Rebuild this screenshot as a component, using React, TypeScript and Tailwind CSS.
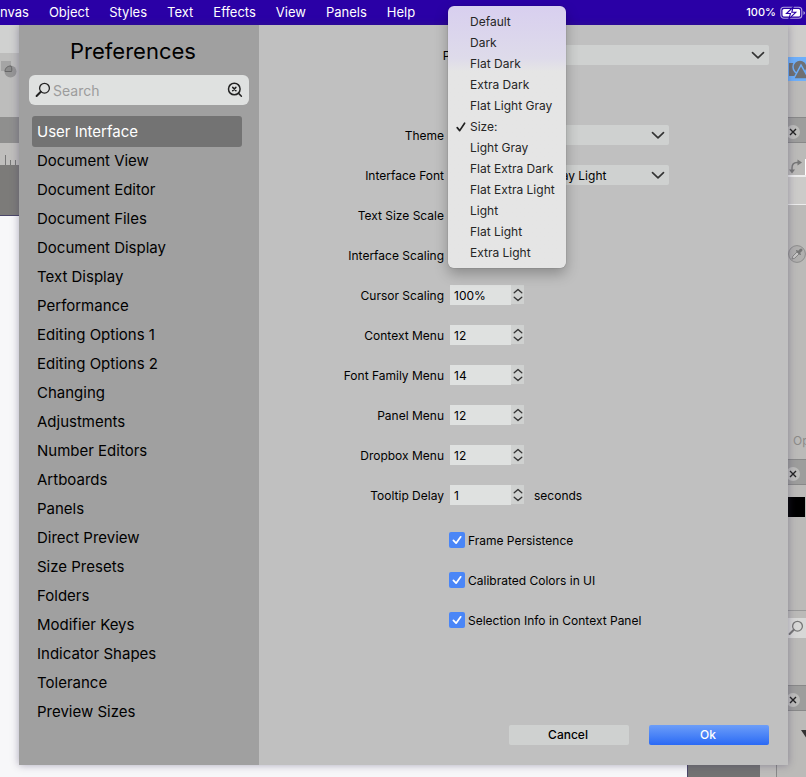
import React, { useId } from "react";

const menuBar = ["nvas", "Object", "Styles", "Text", "Effects", "View", "Panels", "Help"];

const sections = [
  "User Interface", "Document View", "Document Editor", "Document Files", "Document Display",
  "Text Display", "Performance", "Editing Options 1", "Editing Options 2", "Changing",
  "Adjustments", "Number Editors", "Artboards", "Panels", "Direct Preview", "Size Presets",
  "Folders", "Modifier Keys", "Indicator Shapes", "Tolerance", "Preview Sizes",
];

const themes = [
  "Default", "Dark", "Flat Dark", "Extra Dark", "Flat Light Gray", "Size:", "Light Gray",
  "Flat Extra Dark", "Flat Extra Light", "Light", "Flat Light", "Extra Light",
];

function Magnifier({ className }: { className: string }) {
  return (
    <svg viewBox="0 0 16 16" className={className} fill="none" stroke="currentColor">
      <circle cx="9.5" cy="6.2" r="4.9" strokeWidth="1.3" />
      <path d="M5.8 9.8 1.6 14" strokeWidth="2" strokeLinecap="round" />
    </svg>
  );
}

function ClearIcon() {
  return (
    <svg viewBox="0 0 16 16" className="size-4" fill="none" stroke="#222" strokeWidth="1.5" strokeLinecap="round">
      <circle cx="7.3" cy="7" r="5.8" />
      <path d="m11.6 11.4 2.8 2.8M5.7 5.4l3.2 3.2M8.9 5.4 5.7 8.6" />
    </svg>
  );
}

function Dropdown({ label, value, wide, children }: { label: string; value: string; wide?: boolean; children?: React.ReactNode }) {
  const id = useId();
  return (
    <div className="flex h-5 items-center gap-1.5">
      <label htmlFor={id} className={wide ? "w-[220px] shrink-0 pt-0.5 text-right" : "w-[185px] shrink-0 pt-0.5 text-right"}>{label}</label>
      <div className={wide ? "relative mr-[19px] flex-1" : "relative w-[219px]"}>
        <select id={id} defaultValue={value} className="block h-5 w-full appearance-none rounded-xs bg-[#cfd1d0] pt-px text-black outline-none">
          <option value={value}>{value}</option>
        </select>
        <svg viewBox="0 0 14 8" className="pointer-events-none absolute top-1.5 right-1 h-2 w-3.5" fill="none" stroke="#333" strokeWidth="1.6" strokeLinecap="round" strokeLinejoin="round">
          <path d="m1.5 1.6 5.5 5.3 5.5-5.3" />
        </svg>
        {children}
      </div>
    </div>
  );
}

function Stepper({ label, value, unit }: { label: string; value: string; unit?: string }) {
  const id = useId();
  return (
    <div className="flex h-5 items-center gap-1.5">
      <label htmlFor={id} className="w-[185px] shrink-0 pt-0.5 text-right">{label}</label>
      <div className="flex">
        <input id={id} defaultValue={value} className="h-5 w-[61px] bg-[#dfe1e0] px-1 pt-px outline-none" />
        <button type="button" aria-label={"Step " + label} className="flex h-[19px] w-[13px] items-center justify-center bg-[#cfd1d0]">
          <svg viewBox="0 0 10 14" className="h-3.5 w-2.5" fill="none" stroke="#333" strokeWidth="1.3" strokeLinecap="round" strokeLinejoin="round">
            <path d="M1.2 4.8 5 1.4l3.8 3.4M1.2 9.2 5 12.6l3.8-3.4" />
          </svg>
        </button>
      </div>
      {unit && <span className="ml-1 pt-0.5">{unit}</span>}
    </div>
  );
}

function Check({ label }: { label: string }) {
  return (
    <label className="ml-[190px] flex h-5 items-center gap-[3px]">
      <span className="grid size-4 place-items-center">
        <input type="checkbox" defaultChecked className="col-start-1 row-start-1 size-4 appearance-none rounded-xs bg-[#4a86f7]" />
        <svg viewBox="0 0 16 16" className="pointer-events-none col-start-1 row-start-1 size-4" fill="none" stroke="white" strokeWidth="1.7" strokeLinecap="round" strokeLinejoin="round">
          <path d="m4.4 8.4 2.7 2.8 4.6-6.4" />
        </svg>
      </span>
      <span className="pt-0.5">{label}</span>
    </label>
  );
}

function ThemeMenu() {
  return (
    <ul role="listbox" aria-label="Theme" className="absolute -top-[119px] -left-0.5 z-10 w-[118px] rounded-md bg-linear-to-b from-[#d8cfef] via-[#dedbea] via-20% to-[#e5e5e5] to-25% py-[5px] text-[#262626] shadow-[0_6px_14px_rgba(0,0,0,0.28),0_0_1px_rgba(0,0,0,0.5)]">
      {themes.map((t) => (
        <li key={t} role="option" aria-selected={t === "Size:"} className="flex h-[21px] items-center whitespace-nowrap">
          <span className="flex w-[22px] justify-center pl-1">
            {t === "Size:" && (
              <svg viewBox="0 0 10 10" className="size-2.5" fill="none" stroke="#222" strokeWidth="1.7" strokeLinecap="round" strokeLinejoin="round">
                <path d="m1.2 5.6 2.5 3L8.6 1.2" />
              </svg>
            )}
          </span>
          {t}
        </li>
      ))}
    </ul>
  );
}

function PanelHeader() {
  return (
    <div className="flex h-[26px] shrink-0 items-center border-y border-[#888] bg-[#9d9d9c] pt-1 pl-[9px]">
      <svg viewBox="0 0 14 14" className="size-3.5 shrink-0">
        <circle cx="7" cy="7" r="7" fill="#bcbcba" />
        <path d="m4 4 6 6M10 4l-6 6" stroke="#222" strokeWidth="1.4" />
      </svg>
    </div>
  );
}

function Backdrop() {
  return (
    <div className="col-start-1 row-start-1 flex overflow-hidden">
      <div className="flex flex-1 flex-col bg-[#f7f7f9]">
        <div className="h-7 bg-[#d0d1d0]" />
        <div className="h-16 bg-[#bdbdbc] pt-2">
          <svg viewBox="0 0 18 18" className="size-[18px]">
            <rect x="1" y="0" width="10" height="10" fill="#a5a5a5" />
            <circle cx="10.500" cy="10.500" r="6" fill="#969696" />
            <path d="M5 10.500c0-3 2-5.500 6-5.500 1 2 1 4 .5 5.500z" fill="#8d8d8d" stroke="#666" />
          </svg>
        </div>
        <div className="h-[26px] bg-[#8f8f8e]" />
        <div className="h-[22px] bg-[#bfbebc] pt-3">
          <svg viewBox="0 0 19 10" className="h-2.5 w-[19px]" stroke="#777">
            <path d="M5.5 0v10M10.5 5v5M15.5 5v5" />
          </svg>
        </div>
        <div className="h-[51px] border-b border-[#4a4668] bg-[#7c7b79]" />
      </div>
      <div className="w-[73px] border-l border-[#4a4668] bg-[#737373]" />
      <div className="w-4 bg-[#bdbcba]" />
      <div className="flex w-[30px] flex-col border-l border-[#888] bg-[#bbbab8]">
        <div className="h-8 bg-[#cecdcb]" />
        <div className="h-6 bg-[#6eaffa] pl-[11px]">
          <svg viewBox="0 0 18 24" className="h-6 w-[18px]">
            <rect x="1" y="6" width="9" height="13" fill="#6f7073" />
            <circle cx="12" cy="10" r="7" fill="#6f7073" stroke="#6eaffa" strokeWidth="1.5" />
            <path d="M5.500 22 13 8l8 14z" fill="#6f7073" stroke="#6eaffa" strokeWidth="1.5" />
          </svg>
        </div>
        <div className="h-9" />
        <PanelHeader />
        <div className="flex h-[34px] items-end border-b-2 border-[#ececec] pl-3">
          <svg viewBox="0 0 16 16" className="size-4 shrink-0" fill="none" stroke="#777" strokeWidth="1.4">
            <path d="M3 11V9q0-5.500 5-5.500h1" />
            <path d="M0 10.500h6L3 14.500zM8.500.5v6l4.500-3z" fill="#777" stroke="none" />
          </svg>
          <span className="h-4 w-0.5 shrink-0 bg-white" />
        </div>
        <div className="h-7 border-b border-[#ececec] bg-[#cccbc9]" />
        <div className="h-10" />
        <svg viewBox="0 0 18 18" className="ml-[11px] size-[18px] shrink-0">
          <circle cx="9" cy="9" r="8.400" fill="#b0afae" stroke="#8d8d8c" />
          <path d="m4 14 .8-2.800L9.200 6.800l2 2-4.400 4.400z" fill="#c8c7c6" stroke="#777" strokeWidth=".8" />
          <path d="m8.800 5.800 3.400 3.400" stroke="#777" strokeWidth="1.600" strokeLinecap="round" />
          <path d="m11 7 2-2" stroke="#777" strokeWidth="3" strokeLinecap="round" />
        </svg>
        <div className="h-[196px] shrink-0 pt-[170px] pl-4 text-xs text-[#8b8a89]">Op</div>
        <PanelHeader />
        <div className="mt-3 ml-2 h-5 w-5 shrink-0 bg-black" />
        <div className="h-[94px] shrink-0 border-b border-[#999]" />
        <div className="mt-[7px] h-5 shrink-0 bg-[#d8d8d7] pt-0.5 pl-[11px] text-[#777]">
          <Magnifier className="size-4" />
        </div>
        <div className="h-[47px] shrink-0" />
        <PanelHeader />
        <svg viewBox="0 0 12 9" className="mt-[19px] ml-6 h-[9px] w-3 shrink-0">
          <path d="M0 0h12L6 9z" fill="#333" />
        </svg>
      </div>
    </div>
  );
}

export default function App() {
  return (
    <div className="flex min-h-screen flex-col overflow-hidden font-['Inter','Liberation_Sans',sans-serif] text-xs text-black">
      <header className="flex h-[25px] items-center justify-between bg-[#2a00a6] text-white">
        <nav className="flex gap-5 text-[13px]">
          {menuBar.map((m) => (
            <a key={m} href="#">{m}</a>
          ))}
        </nav>
        <div className="flex items-center gap-1 text-[11px] font-medium">
          100%
          <svg viewBox="0 0 26 14" className="h-3.5 w-[26px]">
            <rect x=".8" y="1.300" width="21" height="11" rx="3" fill="none" stroke="#b3a5e0" strokeWidth="1.100" />
            <rect x="2.500" y="3" width="17.600" height="7.600" rx="1.500" fill="white" />
            <path d="M13.200 1 6.500 7.500h4L8.800 13l7-6.700h-4z" fill="white" stroke="#2a00a6" strokeWidth="1.100" />
            <path d="M23.500 5v4q1.500-.8 1.500-2t-1.500-2z" fill="#b3a5e0" />
          </svg>
        </div>
      </header>

      <div className="grid flex-1 grid-cols-1">
        <Backdrop />
        <main className="col-start-1 row-start-1 mr-[18px] mb-3 ml-[19px] flex bg-[#c0c0c0] shadow-[0_0_8px_rgba(60,50,90,0.4)]">
          <aside className="w-60 shrink-0 bg-[#a0a0a0] pb-9">
            <h1 className="pt-2.5 pr-3 text-center text-[22px] leading-8">Preferences</h1>
            <div className="mx-2.5 mt-2 flex h-[30px] items-center rounded-md bg-[#dfe1e0] px-1.5">
              <Magnifier className="size-4 text-[#222]" />
              <input aria-label="Search" placeholder="Search" className="mx-0.5 w-0 flex-1 bg-transparent pt-0.5 text-sm outline-none placeholder:text-[#9c9c9c]" />
              <button type="button" aria-label="Clear search"><ClearIcon /></button>
            </div>
            <nav className="mt-3 mr-[18px] ml-3.5 flex flex-col text-[15px]">
              {sections.map((s, i) => (
                <a
                  key={s}
                  href="#"
                  className={
                    i === 0
                      ? "flex h-[29px] items-center rounded-xs bg-[#737373] px-1 text-white ring-1 ring-[#737373]"
                      : "flex h-[29px] items-center px-1"
                  }
                >
                  {s}
                </a>
              ))}
            </nav>
          </aside>

          <form className="flex flex-1 flex-col pt-5 pb-5" onSubmit={(e) => e.preventDefault()}>
            <Dropdown label="Preset" value="" wide />
            <div className="mt-[60px] flex flex-col gap-5">
              <Dropdown label="Theme" value="Size:">
                <ThemeMenu />
              </Dropdown>
              <Dropdown label="Interface Font" value="San Francisco Display Light" />
              <Stepper label="Text Size Scale" value="" />
              <Stepper label="Interface Scaling" value="" />
              <Stepper label="Cursor Scaling" value="100%" />
              <Stepper label="Context Menu" value="12" />
              <Stepper label="Font Family Menu" value="14" />
              <Stepper label="Panel Menu" value="12" />
              <Stepper label="Dropbox Menu" value="12" />
              <Stepper label="Tooltip Delay" value="1" unit="seconds" />
            </div>
            <div className="mt-[25px] flex flex-col gap-5">
              <Check label="Frame Persistence" />
              <Check label="Calibrated Colors in UI" />
              <Check label="Selection Info in Context Panel" />
            </div>
            <div className="mt-auto mr-[19px] flex justify-end gap-5">
              <button type="button" className="h-5 w-[120px] rounded-xs bg-[#cfd1d0] pr-0.5 font-medium">Cancel</button>
              <button type="submit" className="h-5 w-[120px] rounded-xs bg-linear-to-b from-[#6c9df8] to-[#2a69f5] pr-0.5 font-medium text-white">Ok</button>
            </div>
          </form>
        </main>
      </div>
    </div>
  );
}
